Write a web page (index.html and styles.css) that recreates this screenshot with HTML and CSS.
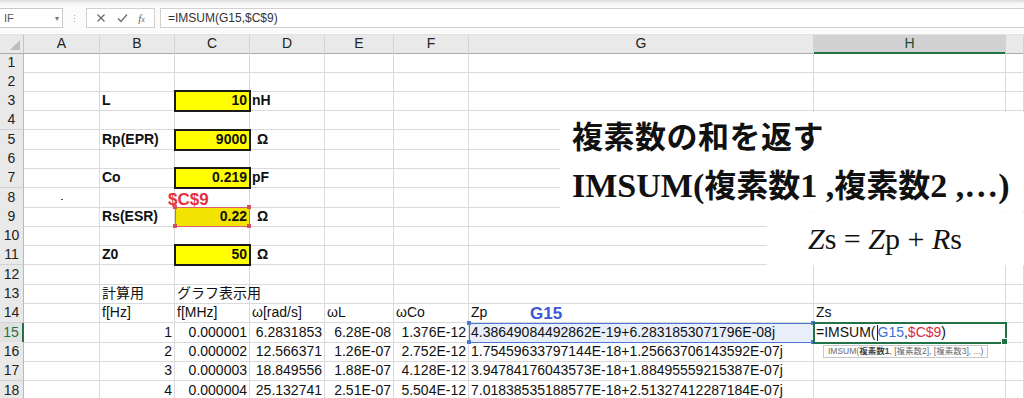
FILE: index.html
```html
<!DOCTYPE html>
<html lang="ja">
<head>
<meta charset="utf-8">
<title>IMSUM</title>
<link rel="stylesheet" href="styles.css">
</head>
<body>
<div class="fbar">
  <div class="namebox"><span>IF</span><span class="caret">▾</span></div>
  <div class="grip"><i></i><i></i><i></i></div>
  <div class="btns">
    <svg width="10" height="10" viewBox="0 0 10 10"><path d="M1.5 1.5 L8.5 8.5 M8.5 1.5 L1.5 8.5" stroke="#6a6a6a" stroke-width="1.2" fill="none"/></svg>
    <svg width="11" height="10" viewBox="0 0 11 10"><path d="M1 5.5 L4 8.5 L10 1.5" stroke="#6a6a6a" stroke-width="1.3" fill="none"/></svg>
    <span class="fx">f<small>x</small></span>
  </div>
  <div class="formula">=IMSUM(G15,$C$9)</div>
</div>

<div class="sheet">
  <div class="row head">
    <div class="corner"></div>
    <div class="ch">A</div><div class="ch">B</div><div class="ch">C</div><div class="ch">D</div><div class="ch">E</div><div class="ch">F</div><div class="ch">G</div><div class="ch sel">H</div><div class="ch"></div>
  </div>

  <div class="row"><div class="rh">1</div><div class="c"></div><div class="c"></div><div class="c"></div><div class="c"></div><div class="c"></div><div class="c"></div><div class="c"></div><div class="c"></div><div class="c"></div></div>
  <div class="row"><div class="rh">2</div><div class="c"></div><div class="c"></div><div class="c"></div><div class="c"></div><div class="c"></div><div class="c"></div><div class="c"></div><div class="c"></div><div class="c"></div></div>
  <div class="row"><div class="rh">3</div><div class="c"></div><div class="c b">L</div><div class="c b r y">10</div><div class="c b">nH</div><div class="c"></div><div class="c"></div><div class="c"></div><div class="c"></div><div class="c"></div></div>
  <div class="row"><div class="rh">4</div><div class="c"></div><div class="c"></div><div class="c"></div><div class="c"></div><div class="c"></div><div class="c"></div><div class="c"></div><div class="c"></div><div class="c"></div></div>
  <div class="row"><div class="rh">5</div><div class="c"></div><div class="c b">Rp(EPR)</div><div class="c b r y">9000</div><div class="c b om">Ω</div><div class="c"></div><div class="c"></div><div class="c"></div><div class="c"></div><div class="c"></div></div>
  <div class="row"><div class="rh">6</div><div class="c"></div><div class="c"></div><div class="c"></div><div class="c"></div><div class="c"></div><div class="c"></div><div class="c"></div><div class="c"></div><div class="c"></div></div>
  <div class="row"><div class="rh">7</div><div class="c"></div><div class="c b">Co</div><div class="c b r y">0.219</div><div class="c b">pF</div><div class="c"></div><div class="c"></div><div class="c"></div><div class="c"></div><div class="c"></div></div>
  <div class="row"><div class="rh">8</div><div class="c dotcell"><span class="dot"></span></div><div class="c"></div><div class="c"></div><div class="c"></div><div class="c"></div><div class="c"></div><div class="c"></div><div class="c"></div><div class="c"></div></div>
  <div class="row"><div class="rh">9</div><div class="c"></div><div class="c b">Rs(ESR)</div><div class="c b r refred">0.22<i class="h tl"></i><i class="h tr"></i><i class="h bl"></i><i class="h br"></i></div><div class="c b om">Ω</div><div class="c"></div><div class="c"></div><div class="c"></div><div class="c"></div><div class="c"></div></div>
  <div class="row"><div class="rh">10</div><div class="c"></div><div class="c"></div><div class="c"></div><div class="c"></div><div class="c"></div><div class="c"></div><div class="c"></div><div class="c"></div><div class="c"></div></div>
  <div class="row"><div class="rh">11</div><div class="c"></div><div class="c b">Z0</div><div class="c b r y">50</div><div class="c b om">Ω</div><div class="c"></div><div class="c"></div><div class="c"></div><div class="c"></div><div class="c"></div></div>
  <div class="row"><div class="rh">12</div><div class="c"></div><div class="c"></div><div class="c"></div><div class="c"></div><div class="c"></div><div class="c"></div><div class="c"></div><div class="c"></div><div class="c"></div></div>
  <div class="row"><div class="rh">13</div><div class="c"></div><div class="c">計算用</div><div class="c">グラフ表示用</div><div class="c"></div><div class="c"></div><div class="c"></div><div class="c"></div><div class="c"></div><div class="c"></div></div>
  <div class="row"><div class="rh">14</div><div class="c"></div><div class="c">f[Hz]</div><div class="c">f[MHz]</div><div class="c">ω[rad/s]</div><div class="c">ωL</div><div class="c">ωCo</div><div class="c">Zp</div><div class="c">Zs</div><div class="c"></div></div>
  <div class="row"><div class="rh act">15</div><div class="c"></div><div class="c r">1</div><div class="c r">0.000001</div><div class="c r">6.2831853</div><div class="c r">6.28E-08</div><div class="c r">1.376E-12</div><div class="c refblue">4.38649084492862E-19+6.2831853071796E-08j<i class="h tl"></i><i class="h tr"></i><i class="h bl"></i><i class="h br"></i></div><div class="c edit">=IMSUM(<i class="caretline"></i><span class="blue">G15</span>,<span class="red">$C$9</span>)<i class="fill"></i></div><div class="c"></div></div>
  <div class="row"><div class="rh">16</div><div class="c"></div><div class="c r">2</div><div class="c r">0.000002</div><div class="c r">12.566371</div><div class="c r">1.26E-07</div><div class="c r">2.752E-12</div><div class="c">1.75459633797144E-18+1.25663706143592E-07j</div><div class="c"></div><div class="c"></div></div>
  <div class="row"><div class="rh">17</div><div class="c"></div><div class="c r">3</div><div class="c r">0.000003</div><div class="c r">18.849556</div><div class="c r">1.88E-07</div><div class="c r">4.128E-12</div><div class="c">3.94784176043573E-18+1.88495559215387E-07j</div><div class="c"></div><div class="c"></div></div>
  <div class="row"><div class="rh">18</div><div class="c"></div><div class="c r">4</div><div class="c r">0.000004</div><div class="c r">25.132741</div><div class="c r">2.51E-07</div><div class="c r">5.504E-12</div><div class="c">7.01838535188577E-18+2.51327412287184E-07j</div><div class="c"></div><div class="c"></div></div>
</div>

<div class="lbl lbl-red">$C$9</div>
<div class="lbl lbl-blue">G15</div>

<div class="card card1">
  <div class="t1">複素数の和を返す</div>
  <div class="t2"><span class="sr">IMSUM(</span><span class="jb">複素数</span><span class="sr">1 ,</span><span class="jb">複素数</span><span class="sr">2 ,…)</span></div>
</div>
<div class="card card2">
  <div class="eq"><i>Z</i>s = <i>Z</i>p + <i>R</i>s</div>
</div>

<div class="tip">IMSUM(<b>複素数1</b>, [複素数2], [複素数3], ...)</div>
</body>
</html>
```

FILE: styles.css
```css
html, body {
  margin: 0;
  padding: 0;
}
body {
  width: 1024px;
  height: 398px;
  overflow: hidden;
  position: relative;
  background: #fff;
  font-family: "Liberation Sans", "Noto Sans CJK JP", sans-serif;
  color: #111;
}

/* formula bar */
.fbar {
  height: 35px;
  box-sizing: border-box;
  padding: 8px 0 6px 0;
  display: flex;
  background: linear-gradient(#d9d9d9 0, #f4f4f4 3px, #fbfbfb 8px);
  border-bottom: 1px solid #e2e2e2;
}
.namebox {
  width: 63px;
  box-sizing: border-box;
  background: #fff;
  border: 1px solid #c9c9c9;
  border-left: none;
  display: flex;
  align-items: center;
  justify-content: space-between;
  padding: 0 3px 0 4px;
  font-size: 11px;
  color: #555;
}
.caret {
  font-size: 8px;
  color: #777;
}
.grip {
  width: 23px;
  display: flex;
  flex-direction: column;
  align-items: center;
  justify-content: center;
  gap: 2px;
}
.grip i {
  width: 1px;
  height: 1px;
  background: #b0b0b0;
}
.btns {
  width: 69px;
  box-sizing: border-box;
  background: #fff;
  border: 1px solid #d0d0d0;
  display: flex;
  align-items: center;
  justify-content: space-around;
  padding: 0 4px;
}
.fx {
  font-family: "Liberation Serif", serif;
  font-style: italic;
  font-size: 11px;
  color: #666;
}
.fx small {
  font-size: 8px;
}
.formula {
  flex: 1;
  margin-left: 5px;
  background: #fff;
  border: 1px solid #d0d0d0;
  border-right: none;
  font-size: 12px;
  color: #333;
  display: flex;
  align-items: center;
  padding-left: 7px;
}

/* sheet */
.row {
  display: grid;
  grid-template-columns: 24px 76px 75px 75px 75px 69px 75px 345px 192px 1fr;
  height: 19.3px;
}
.row.head {
  height: 17.5px;
}
.corner {
  background: #e9e9e9;
  border-right: 1px solid #c4c4c4;
  border-bottom: 1px solid #ababab;
  box-sizing: border-box;
  position: relative;
}
.corner::after {
  content: "";
  position: absolute;
  right: 3px;
  bottom: 3px;
  border-style: solid;
  border-width: 0 0 10px 10px;
  border-color: transparent transparent #bdbdbd transparent;
}
.ch {
  background: #e9e9e9;
  border-right: 1px solid #d2d2d2;
  border-bottom: 1px solid #ababab;
  box-sizing: border-box;
  font-size: 14px;
  color: #222;
  text-align: center;
  line-height: 17px;
}
.ch.sel {
  background: #d2d2d2;
  border-bottom: 2px solid #217346;
  color: #1c4d32;
}
.rh {
  background: #e9e9e9;
  border-right: 1px solid #b9b9b9;
  border-bottom: 1px solid #d2d2d2;
  box-sizing: border-box;
  font-size: 14px;
  color: #222;
  text-align: center;
  line-height: 19px;
}
.rh.act {
  color: #217346;
  border-right: 2px solid #217346;
  background: #e1e1e1;
}
.c {
  border-right: 1px solid #dadada;
  border-bottom: 1px solid #dadada;
  box-sizing: border-box;
  font-size: 14px;
  line-height: 17px;
  padding: 0 2px 1px 2px;
  white-space: nowrap;
  display: flex;
  align-items: flex-end;
  min-width: 0;
  position: relative;
}
.c.r {
  justify-content: flex-end;
}
.c.b {
  font-weight: bold;
}
.c.om {
  padding-left: 7px;
}
.c.y {
  background: #ffff00;
  outline: 2px solid #1a1a1a;
  outline-offset: -1px;
  z-index: 1;
}
.c.refred {
  background: #f3e300;
  outline: 1px solid #d9626f;
  outline-offset: -1px;
  z-index: 1;
}
.c.refblue {
  background: #e8eefa;
  outline: 1px solid #4a78d2;
  outline-offset: -1px;
  z-index: 1;
}
.h {
  position: absolute;
  width: 4px;
  height: 4px;
}
.refred .h { background: #d4505f; }
.refblue .h { background: #4a78d2; }
.h.tl { left: -2px; top: -2px; }
.h.tr { right: -2px; top: -2px; }
.h.bl { left: -2px; bottom: -2px; }
.h.br { right: -2px; bottom: -2px; }

.c.edit {
  outline: 2px solid #217346;
  outline-offset: -1px;
  z-index: 2;
  background: #fff;
}
.edit .fill {
  position: absolute;
  right: -3px;
  bottom: -3px;
  width: 5px;
  height: 5px;
  background: #217346;
  border: 1px solid #fff;
}
.caretline {
  display: inline-block;
  width: 1px;
  height: 16px;
  background: #222;
  margin: 0 0 0 1px;
}
.blue { color: #3a6fd8; }
.red { color: #d92d3e; }

.dotcell {
  justify-content: center;
  align-items: center;
}
.dot {
  width: 2px;
  height: 1px;
  background: #555;
  margin-top: 6px;
}

/* overlays */
.lbl {
  position: absolute;
  font-weight: bold;
  font-size: 17px;
  line-height: 17px;
}
.lbl-red {
  left: 168px;
  top: 191px;
  color: #e5303f;
}
.lbl-blue {
  left: 530px;
  top: 305px;
  color: #3b57d4;
}

.card {
  position: absolute;
  background: #fff;
  z-index: 5;
}
.card1 {
  left: 560px;
  top: 112px;
  width: 464px;
  height: 99px;
  box-sizing: border-box;
  padding: 3px 0 0 12px;
}
.t1 {
  font-family: "Noto Sans CJK JP", sans-serif;
  font-weight: 700;
  font-size: 31px;
  line-height: 40px;
  color: #111;
  letter-spacing: 0.5px;
}
.t2 {
  margin-top: 6px;
  line-height: 44px;
  white-space: nowrap;
  color: #111;
}
.sr {
  font-family: "Liberation Serif", serif;
  font-weight: 700;
  font-size: 34px;
}
.jb {
  font-family: "Noto Sans CJK JP", sans-serif;
  font-weight: 700;
  font-size: 32px;
}
.card2 {
  left: 767px;
  top: 212px;
  width: 257px;
  height: 53px;
  box-sizing: border-box;
  padding: 10px 0 0 41px;
}
.eq {
  font-family: "Liberation Serif", serif;
  font-size: 30px;
  line-height: 34px;
  color: #111;
  white-space: nowrap;
}

.tip {
  position: absolute;
  left: 823px;
  top: 345px;
  height: 13px;
  box-sizing: border-box;
  padding: 0 4px;
  border: 1px solid #c8c8c8;
  background: #fff;
  font-size: 8.5px;
  line-height: 11px;
  color: #6b6b6b;
  white-space: nowrap;
  z-index: 6;
}
.tip b {
  color: #444;
}
```
